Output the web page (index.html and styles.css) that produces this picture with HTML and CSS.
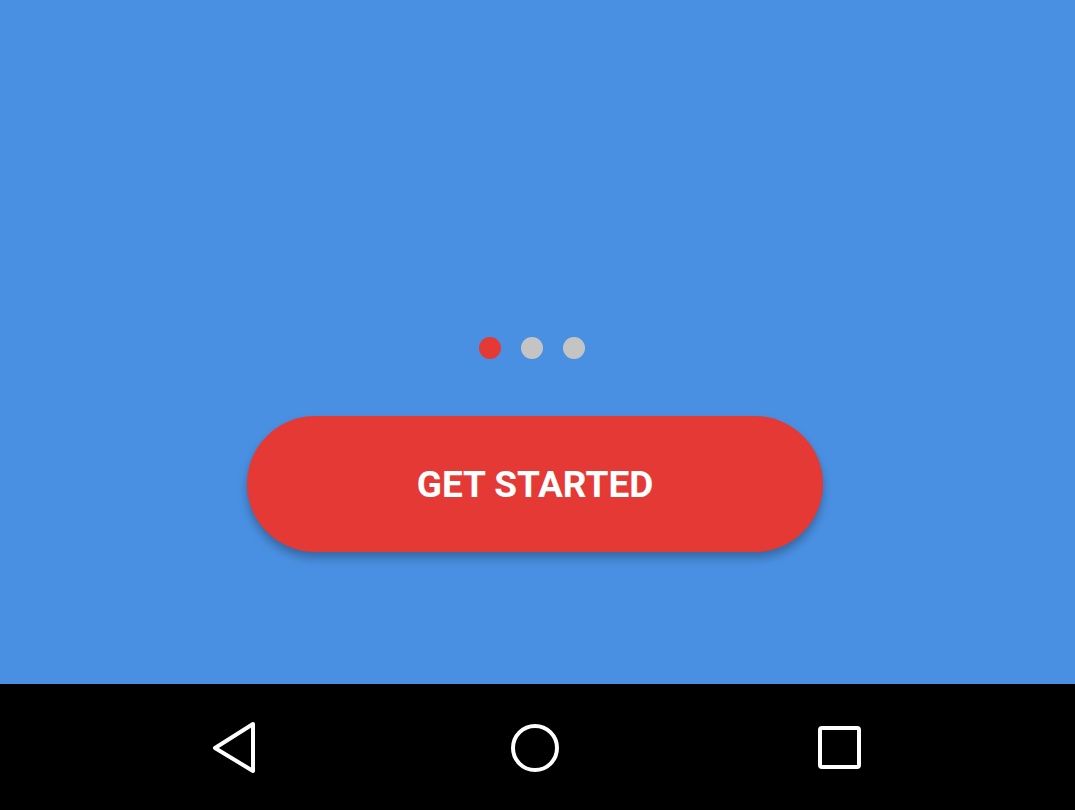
FILE: index.html
```html
<!DOCTYPE html>
<html>
<head>
<meta charset="utf-8">
<link rel="stylesheet" href="styles.css">
</head>
<body>
<div class="screen">
  <main class="content">
    <div class="dots">
      <span class="dot active"></span>
      <span class="dot"></span>
      <span class="dot"></span>
    </div>
    <button class="cta">GET STARTED</button>
  </main>
  <nav class="navbar">
    <span class="nav-icon">
      <svg width="60" height="60" viewBox="0 0 60 60"><path d="M51 7 L13 31 L51 54 Z" fill="none" stroke="#fff" stroke-width="4" stroke-linejoin="round"/></svg>
    </span>
    <span class="nav-icon">
      <svg width="60" height="60" viewBox="0 0 60 60"><circle cx="30" cy="31" r="22" fill="none" stroke="#fff" stroke-width="4"/></svg>
    </span>
    <span class="nav-icon">
      <svg width="60" height="60" viewBox="0 0 60 60"><rect x="12" y="11" width="39" height="39" rx="2" fill="none" stroke="#fff" stroke-width="4"/></svg>
    </span>
  </nav>
</div>
</body>
</html>
```
FILE: styles.css
```css
html, body {
  margin: 0;
  padding: 0;
}
body {
  font-family: Roboto, "Liberation Sans", sans-serif;
}
.screen {
  width: 1075px;
  height: 810px;
  display: flex;
  flex-direction: column;
  overflow: hidden;
}
.content {
  flex: 1;
  background: #4a90e2;
  display: flex;
  flex-direction: column;
  align-items: center;
  padding-top: 337px;
  box-sizing: border-box;
}
.dots {
  display: flex;
  gap: 20px;
  margin-left: -12px;
}
.dot {
  width: 22px;
  height: 22px;
  border-radius: 50%;
  background: #c4c4c4;
}
.dot.active {
  background: #e53935;
}
.cta {
  margin-top: 57px;
  width: 576px;
  height: 136px;
  border: none;
  border-radius: 68px;
  background: #e53935;
  color: #fff;
  font-family: Roboto, "Liberation Sans", sans-serif;
  font-weight: 700;
  font-size: 37px;
  padding-top: 2px;
  box-shadow: 0 6px 10px rgba(0, 0, 0, 0.28);
  margin-left: -5px;
}
.navbar {
  height: 126px;
  background: #000;
  display: flex;
  justify-content: center;
  align-items: center;
  gap: 243px;
  padding-right: 5px;
}
.nav-icon {
  display: flex;
  width: 60px;
  height: 60px;
}
```
